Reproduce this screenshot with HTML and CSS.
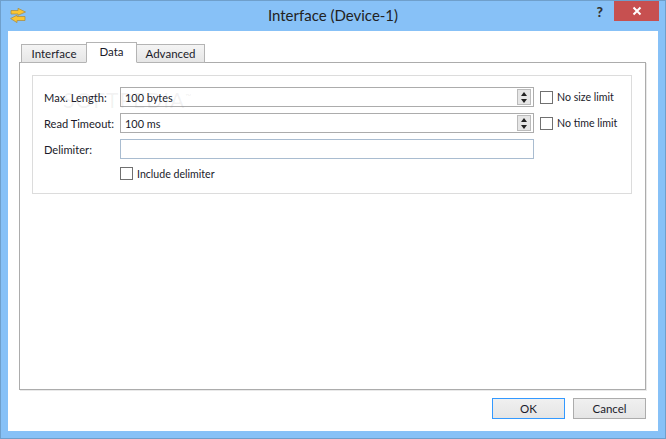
FILE: index.html
```html
<!DOCTYPE html>
<html lang="en">
<head>
<meta charset="utf-8">
<title>Interface (Device-1)</title>
<link rel="stylesheet" href="styles.css">
</head>
<body>
<div class="window">
  <header class="titlebar">
    <div class="bar-left">
      <svg class="app-icon" width="17" height="15" viewBox="0 0 17 15">
        <path d="M1 2.5H8V.3L15.5 4 8 7.3V6H1z" fill="#fbc531" stroke="#a98f4a" stroke-width=".8"/>
        <path d="M15 8.5H7V7.2L.6 10.5 7 14.6V12.5H15z" fill="#fbc531" stroke="#a98f4a" stroke-width=".8"/>
      </svg>
    </div>
    <div class="title">Interface (Device-1)</div>
    <div class="bar-right">
      <div class="help">?</div>
      <div class="close">
        <svg width="10" height="10" viewBox="0 0 10 10"><path d="M1.5 1.5l7 7M8.5 1.5l-7 7" stroke="#fff" stroke-width="2"/></svg>
      </div>
    </div>
  </header>
  <main class="client">
    <div class="tabs">
      <div class="tab t-interface">Interface</div>
      <div class="tab active">Data</div>
      <div class="tab t-advanced">Advanced</div>
    </div>
    <section class="pane">
      <div class="group">
        <div class="row">
          <label class="lbl">Max. Length:</label>
          <div class="spin"><span class="val">100 bytes</span>
            <span class="arrows"><i class="up"></i><i class="down"></i></span></div>
          <span class="check"><i class="box"></i>No size limit</span>
        </div>
        <div class="row">
          <label class="lbl">Read Timeout:</label>
          <div class="spin"><span class="val">100 ms</span>
            <span class="arrows"><i class="up"></i><i class="down"></i></span></div>
          <span class="check"><i class="box"></i>No time limit</span>
        </div>
        <div class="row">
          <label class="lbl">Delimiter:</label>
          <div class="spin delim"></div>
        </div>
        <div class="row include">
          <span class="check"><i class="box"></i>Include delimiter</span>
        </div>
      </div>
    </section>
    <footer class="buttons">
      <button class="btn default">OK</button>
      <button class="btn">Cancel</button>
    </footer>
  </main>
  <div class="mark">SOFTPEDIA<sup>™</sup></div>
</div>
</body>
</html>
```
FILE: styles.css
```css
* { box-sizing: border-box; }
html, body { margin: 0; padding: 0; }
body { width: 666px; height: 439px; overflow: hidden; font-family: "Lato", "Noto Sans", sans-serif; font-size: 11.5px; color: #1a1a2a; }
.window { position: relative; width: 666px; height: 439px; background: #87c1f7; border: 1px solid #6f9fcb; display: flex; flex-direction: column; padding: 0 7px 7px; }
.titlebar { height: 30px; flex: none; display: grid; grid-template-columns: 1fr auto 1fr; align-items: start; }
.bar-left { display: flex; }
.app-icon { margin: 7px 0 0 2px; flex: none; }
.title { text-align: center; font-size: 15px; color: #222; line-height: 29px; }
.bar-right { display: flex; justify-content: flex-end; margin-right: -1px; }
.help { font-size: 14px; font-weight: 900; color: #333; line-height: 22px; margin-right: 11px; }
.close { width: 45px; height: 20px; background: #c75050; display: flex; align-items: center; justify-content: center; }
.client { flex: 1; background: #fff; padding: 11px 12px 12px 11px; display: flex; flex-direction: column; }
.tabs { display: flex; height: 21px; flex: none; align-items: flex-start; padding-left: 2px; position: relative; z-index: 1; }
.tab { height: 19px; margin-top: 2px; line-height: 17px; background: linear-gradient(#f4f4f4, #e6e6e6); border: 1px solid #b4b4b4; margin-right: -1px; text-align: center; }
.t-interface { width: 66px; }
.t-advanced { width: 69px; }
.tab.active { width: 51px; height: 21px; margin-top: 0; background: #fff; border-bottom-color: #fff; line-height: 18px; position: relative; z-index: 1; }
.pane { flex: 1; background: #fff; border: 1px solid #acacac; padding: 12px 13px 12px 12px; margin-top: -1px; box-shadow: 1px 1px 0 #e9e9e9; }
.group { border: 1px solid #dcdcdc; height: 119px; padding: 11px 0 0 11px; display: flex; flex-direction: column; gap: 6px; }
.row { display: flex; align-items: center; height: 20px; flex: none; }
.lbl { width: 76px; flex: none; font-size: 11.1px; }
.spin { width: 414px; height: 20px; border: 1px solid #acacac; display: flex; align-items: center; justify-content: space-between; padding: 0 2px 0 4px; flex: none; background: #fff; font-size: 10.9px; }
.delim { border-color: #a9bcd0; }
.arrows { width: 14px; height: 16px; background: #e6e6e6; border: 1px solid #bbb; display: flex; flex-direction: column; align-items: center; justify-content: space-around; }
.up { width: 0; height: 0; border: 3.5px solid transparent; border-top: 0; border-bottom: 4px solid #222; }
.down { width: 0; height: 0; border: 3.5px solid transparent; border-bottom: 0; border-top: 4px solid #222; }
.check { display: flex; align-items: center; margin-left: 6px; white-space: nowrap; font-size: 10.6px; }
.box { width: 13px; height: 13px; border: 1px solid #707070; background: #fff; margin-right: 4px; flex: none; }
.include { margin-left: 76px; height: 17px; }
.include .check { margin-left: 0; }
.buttons { flex: none; height: 21px; margin-top: 8px; display: flex; justify-content: flex-end; gap: 8px; }
.btn { width: 73px; height: 21px; border: 1px solid #acacac; background: linear-gradient(#f0f0f0, #e5e5e5); font: inherit; color: #1a1a2a; padding: 0; }
.default { border-color: #3399ff; }
.mark { position: absolute; left: 62px; top: 86px; font-size: 21px; letter-spacing: 1px; color: rgba(120,120,120,.1); pointer-events: none; }
.mark sup { font-size: 8px; }
```
